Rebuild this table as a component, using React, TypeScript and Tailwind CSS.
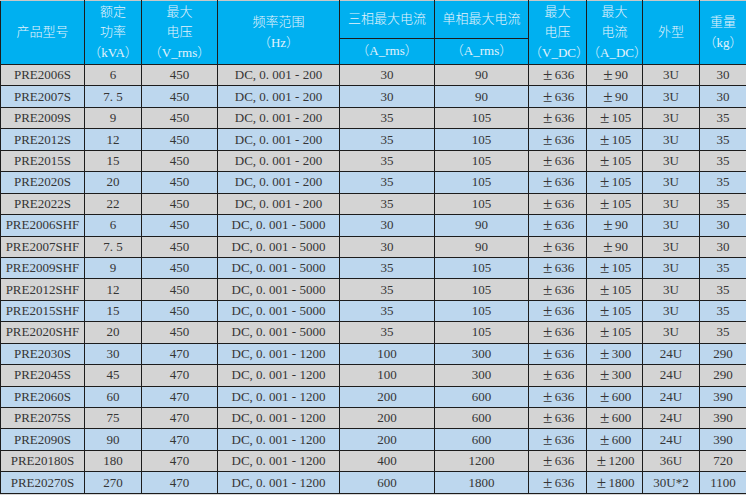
const rows: string[][] = [
  ['PRE2006S', '6', '450', '200', '30', '90', '±636', '±90', '3U', '30'],
  ['PRE2007S', '7. 5', '450', '200', '30', '90', '±636', '±90', '3U', '30'],
  ['PRE2009S', '9', '450', '200', '35', '105', '±636', '±105', '3U', '35'],
  ['PRE2012S', '12', '450', '200', '35', '105', '±636', '±105', '3U', '35'],
  ['PRE2015S', '15', '450', '200', '35', '105', '±636', '±105', '3U', '35'],
  ['PRE2020S', '20', '450', '200', '35', '105', '±636', '±105', '3U', '35'],
  ['PRE2022S', '22', '450', '200', '35', '105', '±636', '±105', '3U', '35'],
  ['PRE2006SHF', '6', '450', '5000', '30', '90', '±636', '±90', '3U', '30'],
  ['PRE2007SHF', '7. 5', '450', '5000', '30', '90', '±636', '±90', '3U', '30'],
  ['PRE2009SHF', '9', '450', '5000', '35', '105', '±636', '±105', '3U', '35'],
  ['PRE2012SHF', '12', '450', '5000', '35', '105', '±636', '±105', '3U', '35'],
  ['PRE2015SHF', '15', '450', '5000', '35', '105', '±636', '±105', '3U', '35'],
  ['PRE2020SHF', '20', '450', '5000', '35', '105', '±636', '±105', '3U', '35'],
  ['PRE2030S', '30', '470', '1200', '100', '300', '±636', '±300', '24U', '290'],
  ['PRE2045S', '45', '470', '1200', '100', '300', '±636', '±300', '24U', '290'],
  ['PRE2060S', '60', '470', '1200', '200', '600', '±636', '±600', '24U', '390'],
  ['PRE2075S', '75', '470', '1200', '200', '600', '±636', '±600', '24U', '390'],
  ['PRE2090S', '90', '470', '1200', '200', '600', '±636', '±600', '24U', '390'],
  ['PRE20180S', '180', '470', '1200', '400', '1200', '±636', '±1200', '36U', '720'],
  ['PRE20270S', '270', '470', '1200', '600', '1800', '±636', '±1800', '30U*2', '1100'],
]

const Pm = ({ v }: { v: string }) => (
  <>
    <span className="inline-block w-[14px] text-center text-[17px] leading-none align-[-1px]">±</span>
    {v.slice(1)}
  </>
)

const th = 'border border-[#1c1c1c] font-light align-middle text-center'

const App = () => {
  return (
    <div
      className="w-[746px] h-[495px] overflow-hidden bg-[#d6d6d6]"
      style={{ fontFamily: '"Liberation Serif", "Noto Sans CJK SC", serif' }}
    >
      <table className="w-[746px] table-fixed border-collapse text-[13px]">
        <colgroup>
          <col className="w-[84px]" />
          <col className="w-[57px]" />
          <col className="w-[76px]" />
          <col className="w-[122px]" />
          <col className="w-[95px]" />
          <col className="w-[94px]" />
          <col className="w-[58px]" />
          <col className="w-[56px]" />
          <col className="w-[57px]" />
          <col className="w-[47px]" />
        </colgroup>
        <thead className="bg-[#00b0f0] text-[#e4f3fc] leading-[20.5px]">
          <tr className="h-[38px]">
            <th rowSpan={2} className={`${th} border-t-[#c8c8c8]`}>产品型号</th>
            <th rowSpan={2} className={`${th} border-t-[#c8c8c8]`}>
              额定<br />功率<br />（kVA）
            </th>
            <th rowSpan={2} className={`${th} border-t-[#c8c8c8]`}>
              最大<br />电压<br />（V_rms）
            </th>
            <th rowSpan={2} className={`${th} border-t-[#c8c8c8]`}>
              频率范围<br />（Hz）
            </th>
            <th className={`${th} border-t-[#c8c8c8]`}>三相最大电流</th>
            <th className={`${th} border-t-[#c8c8c8]`}>单相最大电流</th>
            <th rowSpan={2} className={`${th} border-t-[#c8c8c8]`}>
              最大<br />电压<br />（V_DC）
            </th>
            <th rowSpan={2} className={`${th} border-t-[#c8c8c8]`}>
              最大<br />电流<br />（A_DC）
            </th>
            <th rowSpan={2} className={`${th} border-t-[#c8c8c8]`}>外型</th>
            <th rowSpan={2} className={`${th} border-t-[#c8c8c8]`}>
              重量<br />（kg）
            </th>
          </tr>
          <tr className="h-[26px]">
            <th className={th}>（A_rms）</th>
            <th className={th}>（A_rms）</th>
          </tr>
        </thead>
        <tbody className="text-[#353535]">
          {rows.map((r, i) => (
            <tr
              key={r[0]}
              className={`h-[21.45px] ${i % 2 === 0 ? 'bg-[#d4d4d4]' : 'bg-[#bdd7ee]'}`}
            >
              {r.map((c, j) => (
                <td
                  key={j}
                  className="border border-[#1c1c1c] text-center align-middle p-0 leading-[20px] whitespace-nowrap"
                >
                  {j === 3 ? `DC, 0. 001 - ${c}` : c.startsWith('±') ? <Pm v={c} /> : c}
                </td>
              ))}
            </tr>
          ))}
        </tbody>
      </table>
    </div>
  )
}

export default App
